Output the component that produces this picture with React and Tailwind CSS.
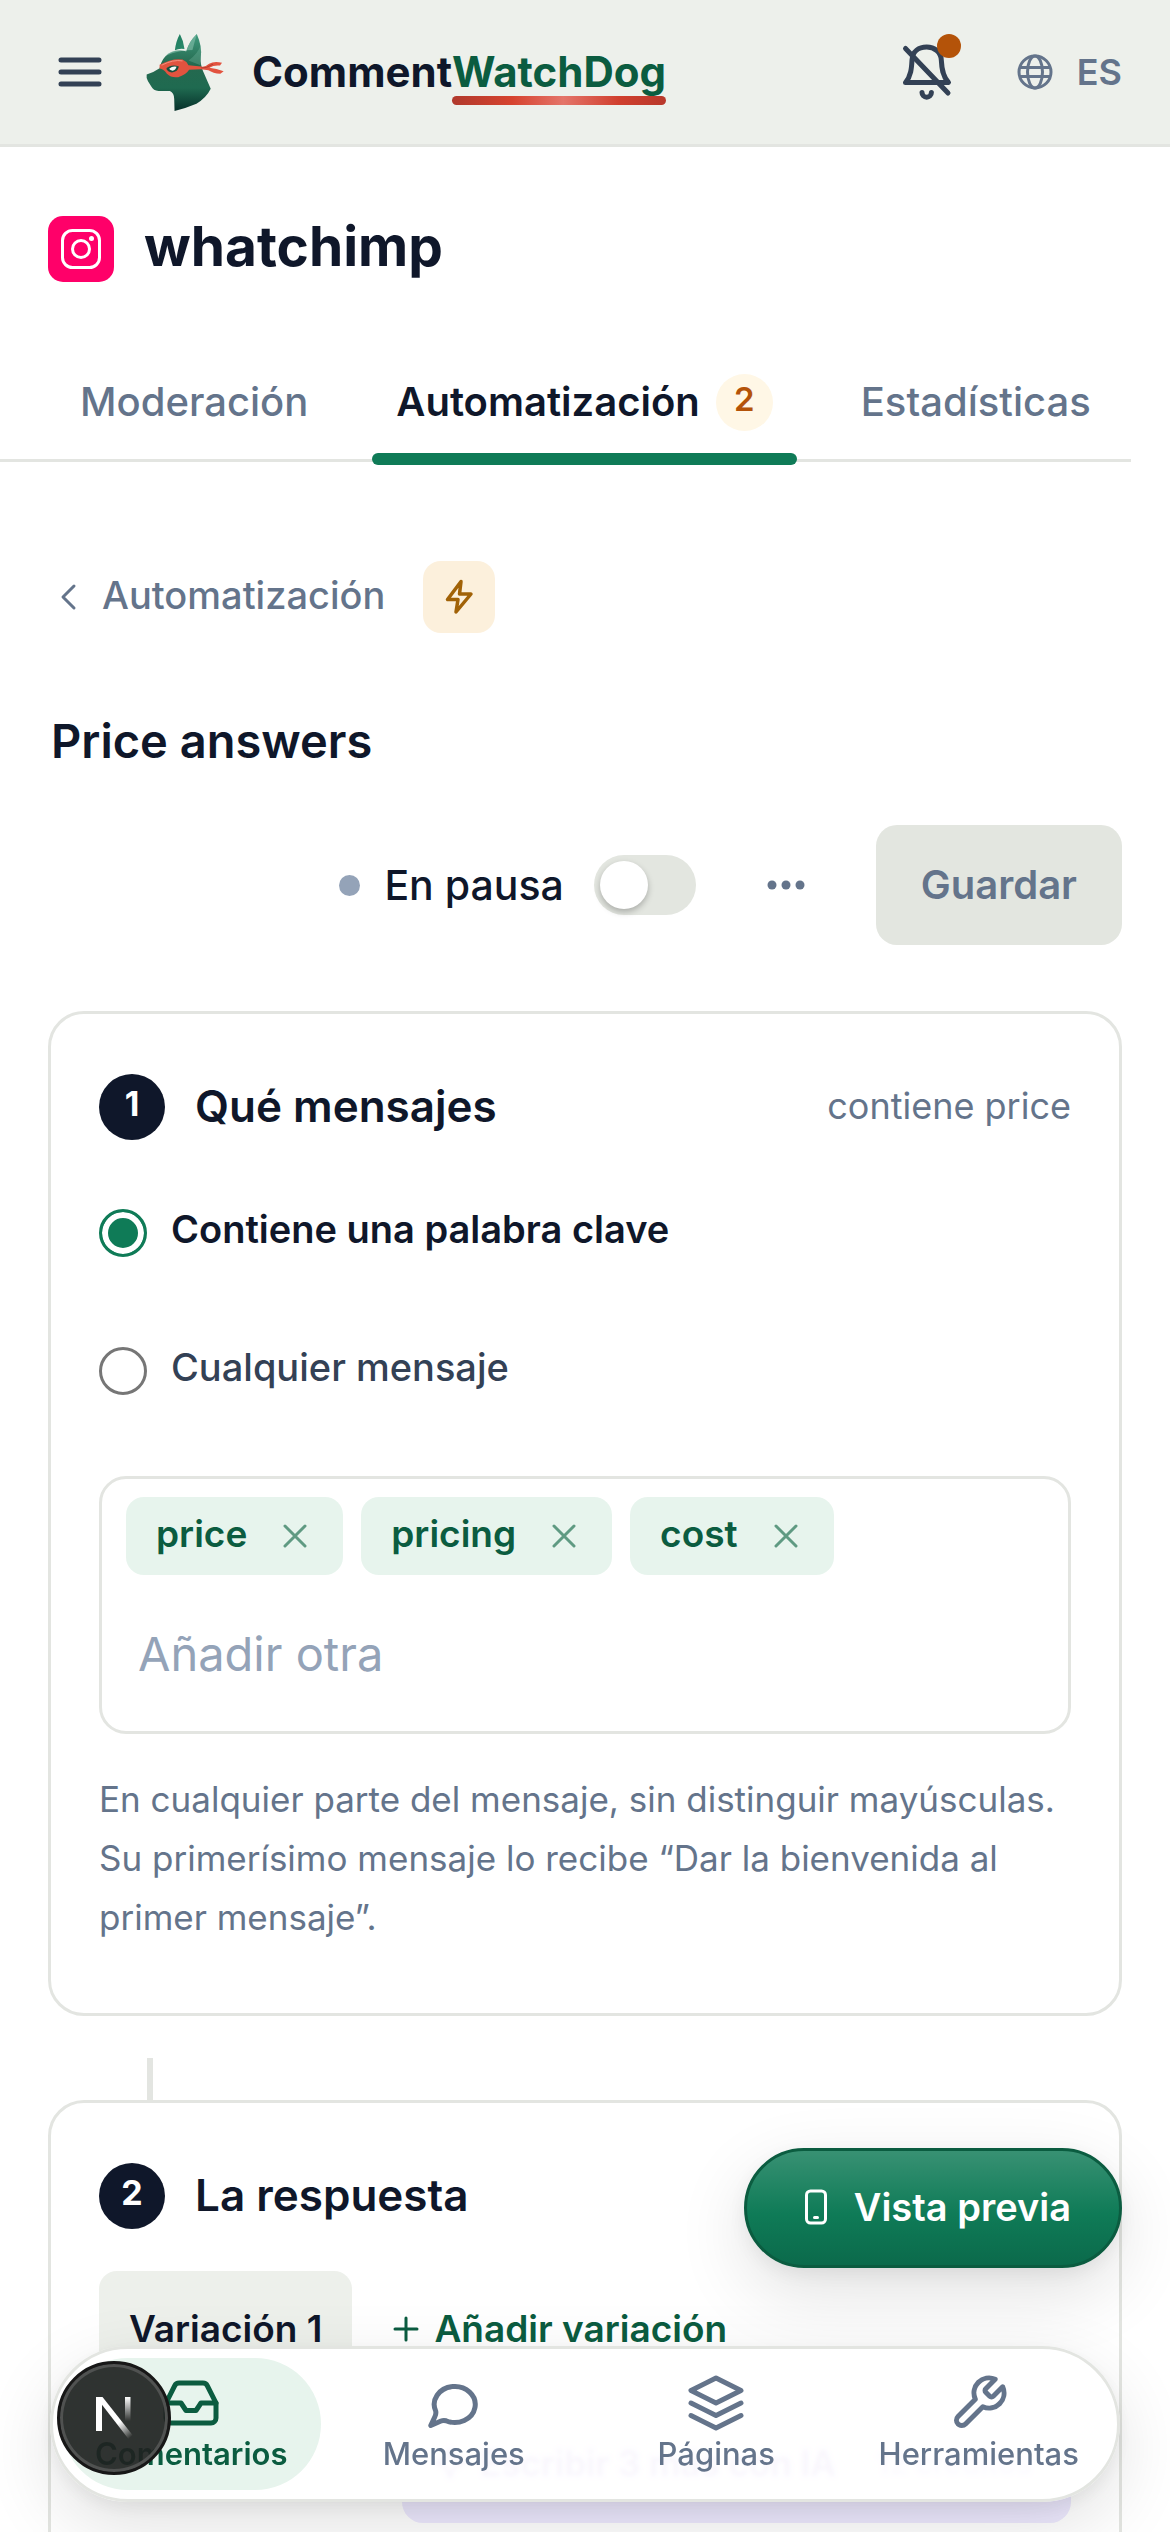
import React, { useState } from 'react';

const DogLogo = () => (
  <svg viewBox="50 38 235 236" className="h-[79px] w-[78px]" aria-hidden="true">
    <defs>
      <linearGradient id="dogHead" x1="0" y1="0" x2="0" y2="1">
        <stop offset="0" stopColor="#3f9a7d" />
        <stop offset="0.4" stopColor="#25694f" />
        <stop offset="0.7" stopColor="#1f6a50" />
        <stop offset="1" stopColor="#06302a" />
      </linearGradient>
      <linearGradient id="dogEar" x1="0" y1="0" x2="1" y2="1">
        <stop offset="0" stopColor="#1d7c5e" />
        <stop offset="1" stopColor="#2b8a6b" />
      </linearGradient>
    </defs>
    <path d="M152 40 Q140 62 137 89 Q150 82 166 85 Q163 60 152 40Z" fill="url(#dogEar)" />
    <path
      d="M203 40 Q180 62 171 92 Q132 84 108 108 Q96 121 91 143 Q72 156 52 162 Q50 172 56 182 L66 198 Q72 210 88 212 L122 212 Q135 218 135 236 L136 272 Q174 262 202 250 Q232 232 245 205 L222 152 Q213 130 215 112 Q220 78 203 40Z"
      fill="url(#dogHead)"
    />
    <path d="M108 106 Q130 84 171 92 L176 80 Q182 62 203 41 Q196 66 190 88 Q150 88 108 106Z" fill="#8cc5b1" opacity="0.55" />
    <path d="M215 74 Q206 100 178 120 L214 134 Q213 122 215 112 Q217 94 215 74Z" fill="#7fbfa8" opacity="0.3" />
    <path
      d="M91 133 Q130 112 160 117 Q172 122 178 134 L216 138 Q230 140 240 130 Q256 120 279 127 L273 135 Q254 133 241 142 Q262 144 284 152 L274 160 Q252 158 238 149 L216 146 L180 148 Q170 164 147 170 Q126 173 113 160 Q103 145 91 144Z"
      fill="#e2533f"
    />
    <path d="M97 134 Q132 116 160 121" stroke="#f3907f" strokeWidth="3" fill="none" />
    <path d="M216 142 L232 141 Q244 134 252 131" stroke="#b53c2e" strokeWidth="3" fill="none" />
    <path d="M111 145 Q126 130 149 138 Q146 154 128 156 Q115 154 111 145Z" fill="#174f3e" />
    <path d="M120 145 Q130 136 142 139 Q139 150 130 151 Q122 150 120 145Z" fill="#f4faf7" />
  </svg>
);

const MenuIcon = () => (
  <svg viewBox="0 0 48 36" className="h-9 w-12" fill="none" stroke="#334155" strokeWidth="5" strokeLinecap="round">
    <path d="M5 6h38M5 18h38M5 30h38" />
  </svg>
);

const BellOffIcon = () => (
  <svg viewBox="0 0 60 60" className="size-[60px]" fill="none" stroke="#334155" strokeWidth="5" strokeLinecap="round" strokeLinejoin="round">
    <path d="M8.5 40.5C14 34 14.6 26 15 18 15.5 9 22 5 29.7 5S44 10 44.3 18C44.7 26 45.5 34 51.5 40.5Z" />
    <path d="M8.5 6.5 51 51M25 50.5a4.7 4.7 0 0 0 9.4 0" />
  </svg>
);

const GlobeIcon = () => (
  <svg viewBox="0 0 36 36" className="size-9" fill="none" stroke="#64748b" strokeWidth="3">
    <circle cx="18" cy="18" r="16" />
    <ellipse cx="18" cy="18" rx="7.5" ry="16" />
    <path d="M3 13.5h30M3 22.5h30" />
  </svg>
);

const InstagramIcon = () => (
  <svg viewBox="0 0 42 42" className="size-[42px]" fill="none" stroke="#fff" strokeWidth="3">
    <rect x="2.5" y="2.5" width="37" height="37" rx="10" />
    <circle cx="21" cy="21" r="8.5" />
    <circle cx="31.5" cy="10.5" r="2.5" fill="#fff" stroke="none" />
  </svg>
);

const NextMark = () => (
  <svg viewBox="0 0 42 46" className="h-[46px] w-[42px]" aria-hidden="true">
    <defs>
      <linearGradient id="nDiag" x1="20" y1="22" x2="37" y2="43" gradientUnits="userSpaceOnUse">
        <stop offset="0.3" stopColor="#fff" />
        <stop offset="1" stopColor="#fff" stopOpacity="0" />
      </linearGradient>
      <linearGradient id="nStem" x1="0" y1="2" x2="0" y2="26" gradientUnits="userSpaceOnUse">
        <stop offset="0" stopColor="#fff" />
        <stop offset="1" stopColor="#fff" stopOpacity="0" />
      </linearGradient>
    </defs>
    <path d="M3 2h6v34H3z" fill="#fff" />
    <path d="M3 2h6.5L39.5 40l-4 4z" fill="url(#nDiag)" />
    <path d="M32 2h5.5v24H32z" fill="url(#nStem)" />
  </svg>
);

const NavIcon = ({ name }) => (
  <svg viewBox="0 0 24 24" className="size-[60px]" fill="none" stroke="currentColor" strokeWidth="2" strokeLinecap="round" strokeLinejoin="round">
    {name === 'inbox' && (
      <>
        <path d="M22 12h-6l-2 3h-4l-2-3H2" />
        <path d="M5.45 5.11 2 12v6a2 2 0 0 0 2 2h16a2 2 0 0 0 2-2v-6l-3.45-6.89A2 2 0 0 0 16.76 4H7.24a2 2 0 0 0-1.79 1.11z" />
      </>
    )}
    {name === 'message' && (
      <path d="M2.7 21 4.3 17.6Q4.9 16.4 4.7 15.3A8.2 7.2 0 1 1 8.8 19.1Q7.8 18.8 6.8 19.2Z" />
    )}
    {name === 'layers' && <path d="M12 2 2 7l10 5 10-5-10-5zM2 17l10 5 10-5M2 12l10 5 10-5" />}
    {name === 'wrench' && (
      <path d="M14.7 6.3a1 1 0 0 0 0 1.4l1.6 1.6a1 1 0 0 0 1.4 0l3.77-3.77a6 6 0 0 1-7.94 7.94l-6.91 6.91a2.12 2.12 0 0 1-3-3l6.91-6.91a6 6 0 0 1 7.94-7.94l-3.76 3.76z" />
    )}
  </svg>
);

const StepHeader = ({ number, title, summary }) => (
  <div className="flex items-center">
    <span className="flex size-[66px] items-center justify-center rounded-full bg-[#0f172a] pb-1.5 text-[34px] leading-none font-bold text-white">
      {number}
    </span>
    <h3 className="ml-[30px] pb-0.5 text-[44px] leading-[60px] font-semibold">{title}</h3>
    {summary && <span className="ml-auto pb-0.5 text-[36px] leading-[60px] text-[#64748b]">{summary}</span>}
  </div>
);

const tabs = [
  { id: 'moderation', label: 'Moderación' },
  { id: 'automation', label: 'Automatización', count: 2 },
  { id: 'stats', label: 'Estadísticas' },
];

const navItems = [
  { label: 'Comentarios', icon: 'inbox' },
  { label: 'Mensajes', icon: 'message' },
  { label: 'Páginas', icon: 'layers' },
  { label: 'Herramientas', icon: 'wrench' },
];

const App = () => {
  const [match, setMatch] = useState('keyword');
  const [active, setActive] = useState(false);
  const [keywords, setKeywords] = useState(['price', 'pricing', 'cost']);

  const options = [
    { id: 'keyword', label: 'Contiene una palabra clave' },
    { id: 'any', label: 'Cualquier mensaje' },
  ];

  return (
    <div className="relative h-screen overflow-hidden bg-white font-[Inter,sans-serif] text-[#0f172a]">
      <header className="flex h-[147px] items-center border-b-[3px] border-[#e3e5e1] bg-[#edf0eb] pr-12 pl-14">
        <button type="button" aria-label="Menú">
          <MenuIcon />
        </button>
        <a href="#inicio" className="ml-[42px] flex items-center gap-7">
          <DogLogo />
          <span className="text-[42px] leading-[60px] font-bold">
            Comment
            <span className="relative inline-block text-[#0b5c40]">
              WatchDog
              <span className="absolute inset-x-0 top-[54px] h-[9px] rounded-full bg-[linear-gradient(90deg,#b0392c,#d6432f_28%,#e4756a_52%,#d03f2e_78%,#b8382b)]" />
            </span>
          </span>
        </a>
        <button type="button" aria-label="Notificaciones" className="relative ml-auto">
          <BellOffIcon />
          <span className="absolute -top-2 -right-1 size-6 rounded-full bg-[#b45309]" />
        </button>
        <button type="button" className="ml-[60px] flex items-center gap-6 text-[36px] leading-[54px] font-semibold text-[#64748b]">
          <GlobeIcon />
          ES
        </button>
      </header>

      <div className="flex items-center gap-[30px] px-12 pt-[69px]">
        <span className="flex size-[66px] items-center justify-center rounded-[15px] bg-[#ff0069]">
          <InstagramIcon />
        </span>
        <h1 className="pb-1.5 text-[55px] leading-[60px] font-bold">whatchimp</h1>
      </div>

      <div role="tablist" className="mt-[63px] mr-[39px] flex gap-10 border-b-[3px] border-[#e3e5e1] pl-14">
        {tabs.map(tab => (
          <button
            key={tab.id}
            type="button"
            role="tab"
            aria-selected={tab.id === 'automation'}
            className="relative flex h-[114px] items-center gap-4 px-6 text-[40px] leading-[60px] font-medium text-[#64748b] aria-selected:font-semibold aria-selected:text-[#0f172a]"
          >
            {tab.label}
            {tab.count && (
              <span className="flex size-[57px] items-center justify-center rounded-full bg-[#fff7e6] pb-1.5 text-[33px] leading-none font-semibold text-[#b45309]">
                {tab.count}
              </span>
            )}
            {tab.id === 'automation' && <span className="absolute inset-x-0 -bottom-1.5 h-3 rounded-[6px] bg-[#0f7b57]" />}
          </button>
        ))}
      </div>

      <main className="px-12 pt-[99px]">
        <div className="flex items-center gap-[38px]">
          <a href="#automatizacion" className="flex items-center gap-[18px] text-[38px] leading-[60px] font-medium text-[#64748b]">
            <svg viewBox="0 0 36 36" className="size-9" fill="none" stroke="currentColor" strokeWidth="3" strokeLinecap="round" strokeLinejoin="round">
              <path d="M26 7 15 18l11 11" />
            </svg>
            <span className="pb-1">Automatización</span>
          </a>
          <span className="flex size-[72px] items-center justify-center rounded-[18px] bg-[#fcf0dc]">
            <svg viewBox="0 0 36 36" className="size-9" fill="none" stroke="#a16207" strokeWidth="3.5" strokeLinejoin="round">
              <path d="M20 2.5 6.5 20.5H17L15 33 30 15H18.5Z" />
            </svg>
          </span>
        </div>

        <h2 className="mt-[78px] px-[3px] text-[47px] leading-[60px] font-semibold">Price answers</h2>

        <div className="mt-[54px] flex items-center justify-end gap-[30px]">
          <label className="flex items-center text-[41px] leading-[60px] font-medium">
            <span className="mr-6 size-[21px] rounded-full bg-[#94a3b8]" />
            En pausa
            <input type="checkbox" role="switch" checked={active} onChange={e => setActive(e.target.checked)} className="peer sr-only" />
            <span className="ml-[30px] flex h-[60px] w-[102px] items-center rounded-full bg-[#e3e6e0] px-1.5 peer-checked:justify-end peer-checked:bg-[#0f7b57]">
              <span className="size-12 rounded-full bg-white shadow-[0_3px_6px_rgba(0,0,0,0.25)]" />
            </span>
          </label>
          <button type="button" aria-label="Más opciones" className="flex size-[120px] items-center justify-center">
            <svg viewBox="0 0 42 12" className="h-3 w-[42px]" fill="#64748b">
              <circle cx="7" cy="6" r="4.5" />
              <circle cx="21" cy="6" r="4.5" />
              <circle cx="35" cy="6" r="4.5" />
            </svg>
          </button>
          <button type="button" className="h-[120px] rounded-[21px] bg-[#e3e6e0] px-[45px] text-[40px] font-semibold text-[#64748b]">
            Guardar
          </button>
        </div>

        <section className="mt-[66px] rounded-[36px] border-[3px] border-[#e3e5e1] px-12 pt-[60px] pb-[66px]">
          <StepHeader number={1} title="Qué mensajes" summary="contiene price" />

          <div className="mt-6">
            {options.map(option => (
              <label key={option.id} className="flex h-[138px] items-center gap-6">
                <input
                  type="radio"
                  name="match"
                  checked={match === option.id}
                  onChange={() => setMatch(option.id)}
                  className="size-12 appearance-none rounded-full border-[3px] border-[#767676] checked:border-[#0f7b57] checked:bg-[#0f7b57] checked:shadow-[inset_0_0_0_6px_#fff]"
                />
                <span className={match === option.id ? 'pb-[9px] text-[38px] leading-[60px] font-semibold' : 'pb-[9px] text-[38px] leading-[60px] font-medium text-[#334155]'}>
                  {option.label}
                </span>
              </label>
            ))}
          </div>

          <div className="mt-9 flex flex-wrap gap-[18px] rounded-[27px] border-[3px] border-[#e3e5e1] px-6 py-[18px]">
            {keywords.map(word => (
              <span key={word} className="flex h-[78px] items-center gap-[30px] rounded-[18px] bg-[#e7f4ed] px-[30px] text-[37px] leading-[60px] font-semibold text-[#0b5c40]">
                <span className="pb-1">{word}</span>
                <button type="button" aria-label={`Quitar ${word}`} onClick={() => setKeywords(keywords.filter(k => k !== word))}>
                  <svg viewBox="0 0 36 36" className="size-9" fill="none" stroke="#5f9a82" strokeWidth="3" strokeLinecap="round">
                    <path d="M8 8l20 20M28 8 8 28" />
                  </svg>
                </button>
              </span>
            ))}
            <input
              type="text"
              aria-label="Añadir otra palabra clave"
              placeholder="Añadir otra"
              className="h-[120px] w-full px-3 text-[47px] outline-none placeholder:text-[#94a3b8]"
            />
          </div>

          <p className="mt-9 text-[35px] leading-[59px] text-[#64748b]">
            En cualquier parte del mensaje, sin distinguir mayúsculas. Su primerísimo mensaje lo recibe “Dar la bienvenida al primer mensaje”.
          </p>
        </section>

        <div className="mt-[42px] ml-[99px] h-[42px] w-1.5 bg-[#e3e5e1]" />

        <section className="rounded-[36px] border-[3px] border-[#e3e5e1] px-12 pt-[60px] pb-[180px]">
          <StepHeader number={2} title="La respuesta" />
          <div className="mt-[42px] flex h-[120px] text-[37px] font-semibold">
            <button type="button" className="rounded-t-[18px] bg-[#edf0eb] px-[30px] pb-1">
              Variación 1
            </button>
            <button type="button" className="ml-9 flex items-center gap-2.5 pb-1 text-[#0b5c40]">
              <svg viewBox="0 0 36 36" className="size-9" fill="none" stroke="currentColor" strokeWidth="3" strokeLinecap="round">
                <path d="M18 7v22M7 18h22" />
              </svg>
              Añadir variación
            </button>
          </div>
          <button type="button" className="mt-3 ml-auto flex h-[120px] w-[669px] items-center rounded-[21px] bg-[#ede9fe] pr-[39px] pl-[30px] text-[35px] font-semibold text-[#5b21b6]">
            <svg viewBox="0 0 36 36" className="size-9" fill="none" stroke="currentColor" strokeWidth="3" strokeLinejoin="round">
              <path d="m18 4 4 10 10 4-10 4-4 10-4-10-10-4 10-4z" />
            </svg>
            <span className="ml-3">Escribir 3 más con IA</span>
            <span className="ml-auto text-[30px] font-medium opacity-50">12 créditos</span>
          </button>
        </section>
      </main>

      <button
        type="button"
        className="absolute right-12 bottom-[264px] flex h-[120px] items-center gap-5 rounded-full border-[3px] border-[#0b5c40] bg-[linear-gradient(180deg,#389173,#0f7b57_55%,#0b6a4b)] pr-12 pb-0.5 pl-[51px] text-[38px] font-semibold text-white shadow-[0_24px_72px_rgba(0,0,0,0.12),0_6px_18px_rgba(0,0,0,0.06)]"
      >
        <svg viewBox="0 0 36 36" className="size-9" fill="none" stroke="currentColor" strokeWidth="3" strokeLinecap="round">
          <rect x="8.5" y="2" width="19" height="32" rx="4" />
          <path d="M16.5 28.5h3" />
        </svg>
        Vista previa
      </button>

      <nav className="absolute inset-x-[50px] bottom-[30px] grid h-[156px] grid-cols-4 gap-1 rounded-full border-[3px] border-[#e3e5e1] bg-white/96 p-[9px] shadow-[0_24px_72px_rgba(0,0,0,0.12),0_6px_18px_rgba(0,0,0,0.06)] backdrop-blur-[2px]">
        {navItems.map((item, i) => (
          <a
            key={item.label}
            href={`#${item.icon}`}
            className={
              i === 0
                ? 'flex flex-col items-center rounded-full bg-[#e7f4ed] pt-[15px] text-[31px] leading-[42px] font-semibold text-[#0b5c40]'
                : 'flex flex-col items-center rounded-full pt-[15px] text-[31px] leading-[42px] font-medium text-[#64748b]'
            }
          >
            <NavIcon name={item.icon} />
            {item.label}
          </a>
        ))}
      </nav>

      <button
        type="button"
        aria-label="Abrir herramientas de desarrollo"
        className="absolute bottom-[57px] left-[57px] flex size-[114px] items-center justify-center rounded-full border-[3px] border-[#171717] bg-[#202221]/92 shadow-[inset_0_0_0_3px_#505251]"
      >
        <NextMark />
      </button>
    </div>
  );
};

export default App;
